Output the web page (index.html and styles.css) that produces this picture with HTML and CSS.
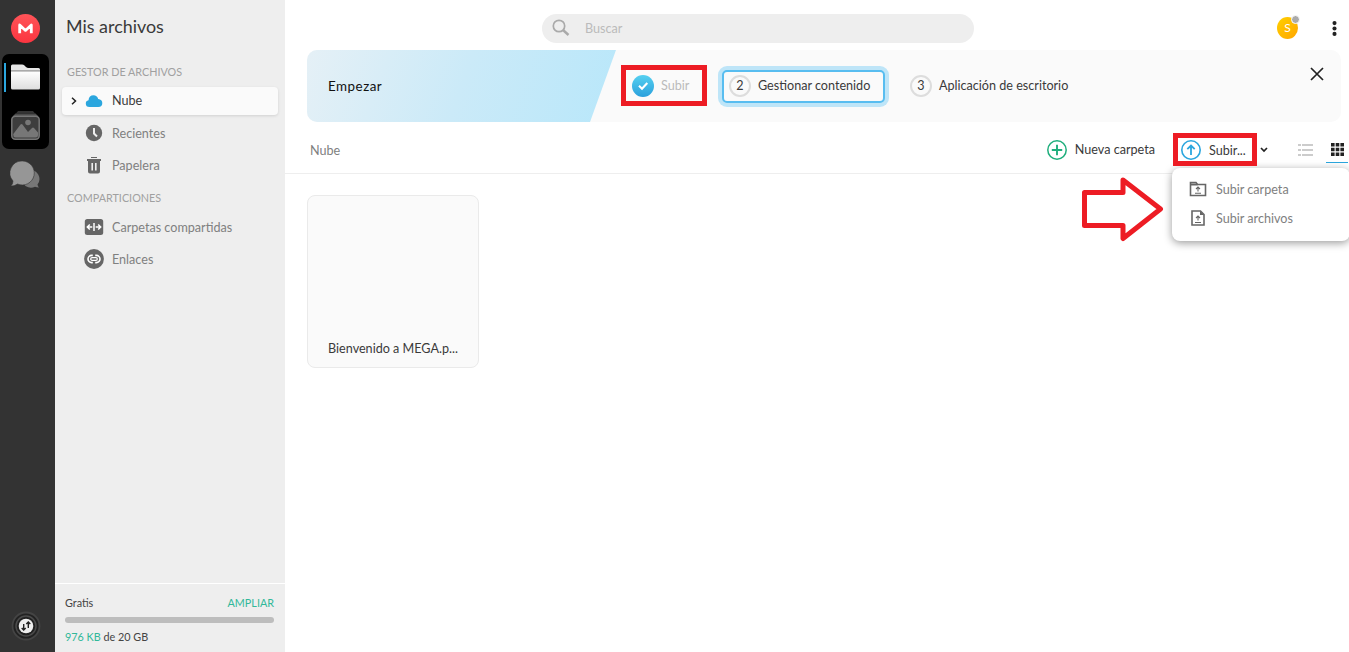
FILE: index.html
```html
<!DOCTYPE html>
<html lang="es">
<head>
    <meta charset="UTF-8">
    <meta name="viewport" content="width=device-width, initial-scale=1.0">
    <title>MEGA</title>
    <link rel="stylesheet" href="styles.css">
</head>
<body>
    <div class="app">
        <nav class="rail">
            <svg class="logo" width="29" height="29" viewBox="0 0 29 29">
                <defs><linearGradient id="red" x1="0" y1="0" x2="0" y2="1"><stop offset="0" stop-color="#ff5458"/><stop offset="1" stop-color="#fb3540"/></linearGradient></defs>
                <circle cx="14.5" cy="14.5" r="14.5" fill="url(#red)"/>
                <path d="M8.700 19.300V11l5.800 5.400L20.300 11v8.300" fill="none" stroke="#fff" stroke-width="2.800" stroke-linejoin="round"/>
            </svg>
            <div class="rail-group">
                <svg width="29" height="26" viewBox="0 0 29 26">
                    <defs><linearGradient id="fold" x1="0" y1="0" x2="0" y2="1"><stop offset="0" stop-color="#fff"/><stop offset="1" stop-color="#dedede"/></linearGradient></defs>
                    <path d="M0 6V2Q0 .5 1.500.5H11q1.500 0 2.500 1l1.500 1.500q1 1 2.500 1H27.500Q29 4 29 5.500V6z" fill="#e6e6e6"/>
                    <path d="M0 6h29v1.200H0z" fill="#aaa"/>
                    <path d="M0 7.200H29V24q0 1.500-1.500 1.500h-26Q0 25.500 0 24z" fill="url(#fold)"/>
                </svg>
                <svg width="29" height="29" viewBox="0 0 29 29">
                    <path d="M7 0H22L24 2.500H5z" fill="#333"/>
                    <path d="M4.500 2.500h20L27 5H2z" fill="#4b4b4b"/>
                    <rect x=".8" y="5.300" width="27.400" height="22.900" rx="3.500" fill="#3d3d3d" stroke="#777" stroke-width="1.500"/>
                    <path d="M2.300 23L9.500 13.500q1-1 2 0L17 21l4-4q1-.8 2 0l4 4.500v2.500q0 2.500-2.500 2.500h-20q-2.200 0-2.200-2.500z" fill="#777"/>
                    <circle cx="17" cy="11.500" r="2.800" fill="#777"/>
                </svg>
            </div>
            <svg class="chat" width="30" height="28" viewBox="0 0 30 28">
                <path d="M20 9a9 9 0 0 1 7.500 14.500q.3 2 1.500 3-2.500 0-4-.8A9 9 0 0 1 13 22z" fill="#777"/>
                <path d="M12.500 0a12 12 0 1 1-5 23Q4 25.500.8 25 3 23 3 20A12 12 0 0 1 12.500 0z" fill="#969696" stroke="#333" stroke-width=".6"/>
            </svg>
            <svg class="transfer" width="30" height="30" viewBox="0 0 30 30">
                <circle cx="15" cy="15" r="13.500" fill="#222" stroke="#444" stroke-width="1.800"/>
                <circle cx="15" cy="15" r="10" fill="#222" stroke="#4b4b4b" stroke-width="1.500"/>
                <circle cx="15" cy="15" r="7.300" fill="#eee"/>
                <path d="M12.700 13v6M10.700 17l2 2 2-2M17.300 17V11M15.300 13l2-2 2 2" fill="none" stroke="#222" stroke-width="1.400"/>
            </svg>
        </nav>

        <aside class="sidebar">
            <h1>Mis archivos</h1>
            <h2 class="files-title">Gestor de archivos</h2>
            <ul>
                <li class="active">
                    <svg class="chevron" width="6" height="8" viewBox="0 0 6 8"><path d="M1 .7L4.500 4 1 7.300" fill="none" stroke="#222" stroke-width="1.500"/></svg>
                    <svg width="20" height="20" viewBox="0 0 20 20"><path d="M5.500 16q-3.700 0-3.700-3.500 0-2.700 2.700-3.200Q5 4.300 9.500 4.300q3.500 0 4.700 3.600 4.100.4 4.100 4.100 0 4-4 4z" fill="#2ba6de"/></svg>
                    <span>Nube</span>
                </li>
                <li>
                    <svg width="20" height="20" viewBox="0 0 20 20"><circle cx="10" cy="10" r="8.200" fill="#666"/><path d="M10 5v5.500l3 3" fill="none" stroke="#eee" stroke-width="2"/></svg>
                    <span>Recientes</span>
                </li>
                <li>
                    <svg width="20" height="20" viewBox="0 0 20 20"><path d="M7 2h6v1H7zM3 4h14v2H3zM4 6h12v10.500q0 2-2 2H6q-2 0-2-2z" fill="#666"/><path d="M8.200 8v7.500M11.800 8v7.500" stroke="#eee" stroke-width="1.600"/></svg>
                    <span>Papelera</span>
                </li>
            </ul>
            <h2 class="shares-title">Comparticiones</h2>
            <ul>
                <li>
                    <svg width="20" height="20" viewBox="0 0 20 20"><rect x=".8" y="2" width="18.400" height="16" rx="2.500" fill="#666"/><path d="M10 6v8M8.300 10H3.500M5.800 7.500L3.300 10l2.500 2.500M11.700 10h4.800M14.200 7.500l2.500 2.500-2.500 2.500" fill="none" stroke="#fff" stroke-width="1.500"/></svg>
                    <span>Carpetas compartidas</span>
                </li>
                <li>
                    <svg width="20" height="20" viewBox="0 0 20 20"><circle cx="10" cy="10" r="9.900" fill="#666"/><path d="M8.800 13.600H7.600a3.600 3.600 0 0 1 0-7.200h1.200M11.200 6.400h1.200a3.600 3.600 0 0 1 0 7.200h-1.200" fill="none" stroke="#fff" stroke-width="1.600"/><rect x="6.700" y="8.700" width="6.600" height="2.600" rx="1.300" fill="none" stroke="#fff" stroke-width="1.200"/></svg>
                    <span>Enlaces</span>
                </li>
            </ul>
            <div class="storage">
                <div class="plan"><span>Gratis</span><a class="green">AMPLIAR</a></div>
                <div class="quota"></div>
                <div class="usage"><span class="green">976 KB</span> de 20 GB</div>
            </div>
        </aside>

        <main>
            <header>
                <div class="search">
                    <svg width="18" height="18" viewBox="0 0 18 18"><circle cx="7" cy="7" r="5.700" fill="none" stroke="#aaa" stroke-width="1.700"/><path d="M11 11l5.500 5" stroke="#aaa" stroke-width="2.400"/></svg>
                    <span>Buscar</span>
                </div>
                <div class="avatar">S<i></i></div>
                <svg class="more" width="5" height="15" viewBox="0 0 5 15" fill="#222"><circle cx="2.500" cy="2.100" r="2.050"/><circle cx="2.500" cy="7.500" r="2.050"/><circle cx="2.500" cy="12.900" r="2.050"/></svg>
            </header>

            <section class="banner">
                <div class="start">Empezar</div>
                <div class="step done">
                    <svg width="22" height="22" viewBox="0 0 22 22"><defs><linearGradient id="blue" x1="0" y1="0" x2="0" y2="1"><stop offset="0" stop-color="#55d0f0"/><stop offset="1" stop-color="#2ba0dc"/></linearGradient></defs><circle cx="11" cy="11" r="11" fill="url(#blue)"/><path d="M7 10.800l3 3L15.300 8" fill="none" stroke="#fff" stroke-width="2.100"/></svg>
                    <span>Subir</span>
                </div>
                <div class="step current"><b>2</b><span>Gestionar contenido</span></div>
                <div class="step"><b>3</b><span>Aplicación de escritorio</span></div>
                <svg class="close" width="14" height="14" viewBox="0 0 14 14"><path d="M1 1l12 12M13 1L1 13" stroke="#222" stroke-width="1.700"/></svg>
            </section>

            <div class="toolbar">
                <span class="crumb">Nube</span>
                <svg width="20" height="20" viewBox="0 0 20 20" fill="none" stroke="#1fae7c"><circle cx="10" cy="10" r="9.200" stroke-width="1.500"/><path d="M10 4.800v10.400M4.800 10h10.400" stroke-width="1.900"/></svg>
                <span class="new-folder">Nueva carpeta</span>
                <div class="upload">
                    <svg width="20" height="20" viewBox="0 0 20 20" fill="none" stroke="#2ba6de"><circle cx="10" cy="10" r="9.200" stroke-width="1.600"/><path d="M10 15V5.500M6.300 9.200L10 5.500l3.700 3.700" stroke-width="1.800"/></svg>
                    <span>Subir...</span>
                </div>
                <svg class="caret" width="8" height="6" viewBox="0 0 8 6"><path d="M1 1l3 3 3-3" fill="none" stroke="#222" stroke-width="1.700"/></svg>
                <svg class="list" width="16" height="12" viewBox="0 0 16 12" fill="#ccc"><path d="M0 0h3v2H0zM4 0h11v2H4zM0 5h3v2H0zM4 5h11v2H4zM0 10h3v2H0zM4 10h11v2H4z"/></svg>
                <div class="grid-view"><svg width="13" height="13" viewBox="0 0 13 13" fill="#222"><path d="M0 0h3.600v3.600H0zM4.700 0h3.600v3.600H4.700zM9.400 0H13v3.600H9.400zM0 4.700h3.600v3.600H0zM4.700 4.700h3.600v3.600H4.700zM9.400 4.700H13v3.600H9.400zM0 9.400h3.600V13H0zM4.700 9.400h3.600V13H4.700zM9.400 9.400H13V13H9.400z"/></svg></div>
            </div>

            <div class="file"><span>Bienvenido a MEGA.p...</span></div>
        </main>
    </div>

    <div class="menu">
        <div class="menu-item">
            <svg width="18" height="16" viewBox="0 0 18 16" fill="none" stroke="#666"><path d="M1.500 14.500V1.500h5.500l1.500 2h8v11z" stroke-width="1.600"/><path d="M1.500 3.500h7" stroke-width="2"/><path d="M9 10.500V6.300M7 8l2-2 2 2M6 12.300h6" stroke-width="1.100"/></svg>
            <span>Subir carpeta</span>
        </div>
        <div class="menu-item">
            <svg width="18" height="16" viewBox="0 0 18 16" fill="none" stroke="#666"><path d="M3 1h8.500L15 4.500V15H3z" stroke-width="1.600"/><path d="M11 1v4h4z" fill="#666" stroke="none"/><path d="M9 10.500V6.300M7 8l2-2 2 2M6 12.500h6" stroke-width="1.100"/></svg>
            <span>Subir archivos</span>
        </div>
    </div>

    <!-- tutorial highlights -->
    <div class="mark mark-step"></div>
    <div class="mark mark-upload"></div>
    <svg class="arrow" width="84" height="74" viewBox="0 0 84 74"><path d="M4.500 20.500h38.500V8l37.500 29L43 66.500V53.500H4.500z" fill="#fff" stroke="#ed1c24" stroke-width="5" stroke-linejoin="round"/></svg>
</body>
</html>
```
FILE: styles.css
```css
* {
    box-sizing: border-box;
}
body {
    margin: 0;
    font-family: Lato, "Open Sans", sans-serif;
    font-size: 12.6px;
    line-height: 16px;
    color: #3a3a3a;
    background: #fff;
    overflow: hidden;
    white-space: nowrap;
}
svg {
    display: block;
    flex: none;
}
.app {
    display: flex;
    height: 652px;
}
/* left icon rail */
.rail {
    width: 55px;
    background: #333;
    display: flex;
    flex-direction: column;
}
.logo {
    margin: 14px 0 11px 11px;
}
.rail-group {
    width: 47px;
    height: 95px;
    margin-left: 2px;
    padding: 10px 0 0 9px;
    border-radius: 7px;
    background: linear-gradient(#2ba6de, #2ba6de) 2px 9px / 2px 29px no-repeat #000;
    display: flex;
    flex-direction: column;
    gap: 21px;
}
.chat {
    margin: 12px 0 0 10px;
}
.transfer {
    margin: auto 0 11px 11px;
}
/* sidebar */
.sidebar {
    width: 230px;
    background: #eee;
    display: flex;
    flex-direction: column;
}
h1 {
    margin: 14px 0 0 11px;
    font-size: 17.9px;
    line-height: 24px;
    font-weight: 400;
}
h2 {
    margin: 0 0 0 12px;
    font-size: 10.8px;
    line-height: 14px;
    font-weight: 400;
    color: #a0a0a0;
    text-transform: uppercase;
}
.files-title {
    margin-top: 27px;
}
.shares-title {
    margin-top: 12px;
}
.sidebar ul {
    list-style: none;
    margin: 8px 7px 0 7px;
    padding: 0;
    display: flex;
    flex-direction: column;
    gap: 4px;
}
.shares-title + ul {
    margin-top: 8px;
}
.sidebar li {
    height: 28px;
    padding-left: 22px;
    display: flex;
    align-items: center;
    gap: 8px;
    color: #808080;
}
.sidebar li span {
    padding-top: 2px;
}
.sidebar .active {
    padding-left: 9px;
    gap: 8px;
    background: #fafafa;
    border-radius: 4px;
    box-shadow: 0 1px 3px rgba(0, 0, 0, .12);
    color: #3a3a3a;
}
.active svg + svg {
    margin-left: -1px;
}
.sidebar .active span {
    padding-top: 0;
}
.storage {
    margin-top: auto;
    height: 69px;
    padding: 12px 11px 0 10px;
    border-top: 1px solid #fff;
    font-size: 10.8px;
    line-height: 14px;
    color: #444;
}
.plan {
    display: flex;
    justify-content: space-between;
}
.quota {
    height: 6px;
    margin: 7px 0 7px;
    border-radius: 3px;
    background: #bdbdbd;
}
.green {
    color: #31b899;
}
/* content */
main {
    flex: 1;
    min-width: 0;
}
header {
    height: 50px;
    display: flex;
    align-items: center;
    padding: 6px 12px 0 257px;
}
.search {
    width: 432px;
    height: 29px;
    padding-left: 10px;
    border-radius: 15px;
    background: #eee;
    color: #bbb;
    display: flex;
    align-items: center;
    gap: 15px;
}
.search span {
    padding-top: 1px;
}
.avatar {
    position: relative;
    width: 21px;
    height: 22px;
    margin-left: auto;
    border-radius: 50%;
    background: linear-gradient(135deg, #ffd000, #ffa500);
    color: #fff;
    font-size: 12px;
    line-height: 22px;
    text-align: center;
}
.avatar i {
    position: absolute;
    top: -2px;
    right: -2px;
    width: 9px;
    height: 9px;
    border: 1px solid #fff;
    border-radius: 50%;
    background: #aaa;
}
.more {
    margin-left: 34px;
}
.banner {
    height: 72px;
    margin: 0 8px 0 22px;
    border-radius: 10px;
    background: #fafafa;
    overflow: hidden;
    display: flex;
    align-items: center;
}
.start {
    width: 309px;
    height: 72px;
    padding-left: 21px;
    font-size: 13.4px;
    letter-spacing: .5px;
    line-height: 72px;
    color: #111;
    background: linear-gradient(110deg, #e5f0f6, #cbeaf8 50%, #b8e7fa);
    clip-path: polygon(0 0, 100% 0, 283px 100%, 0 100%);
}
.step {
    display: flex;
    align-items: center;
    gap: 7px;
    margin-left: 25px;
}
.step span {
    margin-top: -1px;
}
.step b {
    width: 22px;
    height: 22px;
    border: 2px solid #ddd;
    border-radius: 50%;
    font-weight: 400;
    font-size: 12.6px;
    line-height: 17px;
    text-align: center;
}
.done {
    width: 58px;
    margin-left: 16px;
    color: #bbb;
}
.current {
    height: 33px;
    width: 163px;
    margin-left: 32px;
    padding-left: 5px;
    border: 2px solid #58bdf0;
    border-radius: 5px;
    background: #fafafa;
    box-shadow: 0 0 0 4px #bee5f8;
}
.close {
    margin: -24px 17px 0 auto;
}
.toolbar {
    height: 52px;
    padding: 4px 1px 0 25px;
    border-bottom: 1px solid #eee;
    display: flex;
    align-items: center;
}
.crumb {
    margin-right: auto;
    padding-top: 2px;
    color: #808080;
}
.new-folder {
    margin: 0 26px 0 8px;
}
.upload {
    display: flex;
    align-items: center;
    gap: 8px;
    width: 79px;
}
.upload span {
    padding-top: 2px;
}
.caret {
    margin-right: 30px;
}
.list {
    margin-right: 12px;
}
.grid-view {
    width: 22px;
    height: 27px;
    padding: 7px 0 0 5px;
    border-bottom: 1px solid #2ba6de;
}
.file {
    width: 172px;
    height: 173px;
    margin: 21px 0 0 22px;
    padding-bottom: 10px;
    border: 1px solid #eaeaea;
    border-radius: 8px;
    background: #fafafa;
    display: flex;
    justify-content: center;
    align-items: flex-end;
}
/* upload menu */
.menu {
    position: absolute;
    left: 1172px;
    top: 168px;
    width: 178px;
    height: 73px;
    padding: 6px 17px;
    border-radius: 8px;
    background: #fff;
    box-shadow: 0 2px 8px rgba(0, 0, 0, .4);
    color: #808080;
}
.menu-item {
    display: flex;
    align-items: center;
    gap: 9px;
    height: 29px;
}
.menu-item span {
    padding-top: 2px;
}
.mark {
    position: absolute;
    border: 5px solid #ed1c24;
}
.mark-step {
    left: 621px;
    top: 65px;
    width: 86px;
    height: 41px;
}
.mark-upload {
    left: 1173px;
    top: 133px;
    width: 84px;
    height: 33px;
}
.arrow {
    position: absolute;
    left: 1080px;
    top: 172px;
}
```
